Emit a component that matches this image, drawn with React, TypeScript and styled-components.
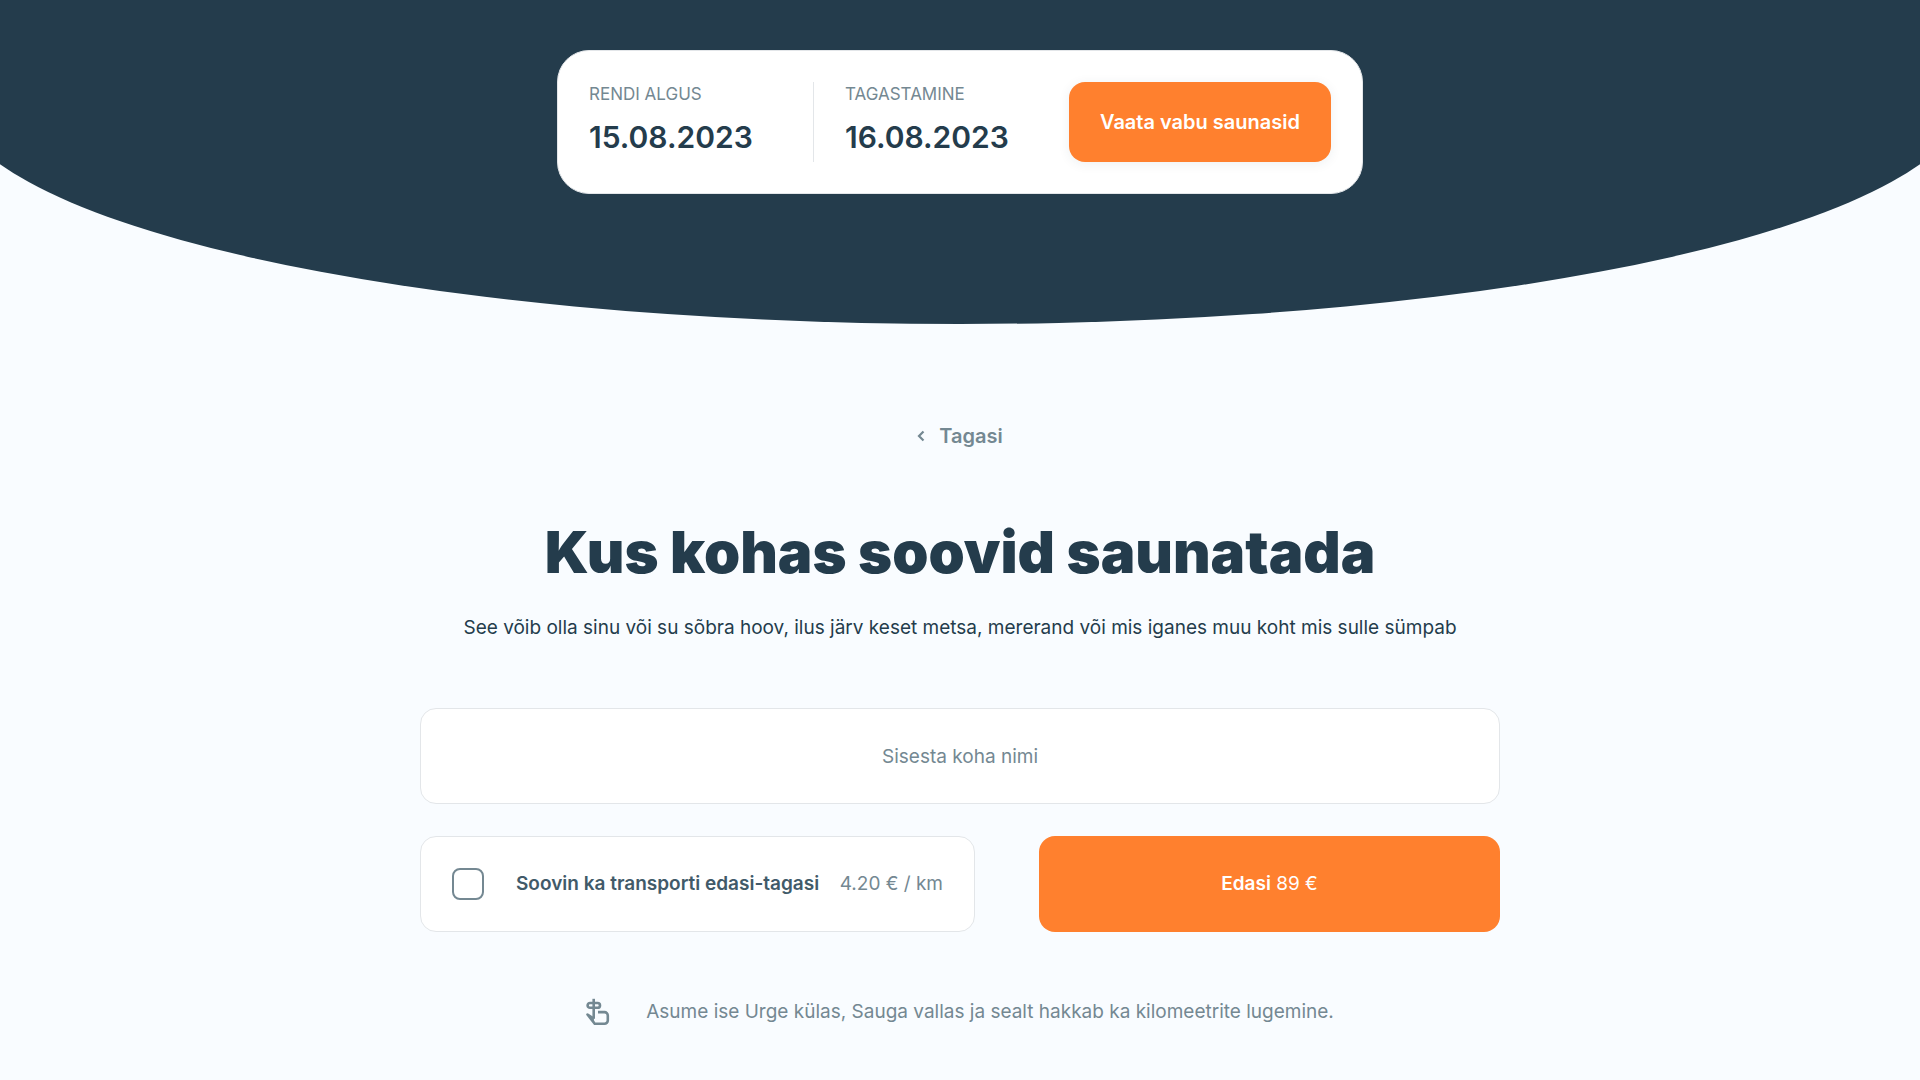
import React, { useState } from "react";
import styled, { createGlobalStyle } from "styled-components";

const ink = "#243c4c";
const muted = "#748892";
const line = "#e3e6e9";
const orange = "#ff802e";
const sans = `Inter, "Noto Sans", sans-serif`;

const GlobalStyle = createGlobalStyle`
  *, *::before, *::after { box-sizing: border-box; }
  body {
    margin: 0;
    background: #f9fcff;
    color: ${ink};
    font-family: ${sans};
    font-size: 19px;
    line-height: 32px;
  }
  button, input { font: inherit; color: inherit; }
`;

const Page = styled.div`
  overflow-x: clip;
`;

const Hero = styled.header`
  display: flex;
  justify-content: center;
  margin: 0 -2.5%;
  padding: 50px 5% 130px;
  background: ${ink};
  border-radius: 0 0 50% 50% / 0 0 230px 230px;
`;

const SearchCard = styled.form`
  display: grid;
  grid-template-columns: 224fr 256fr auto;
  width: 100%;
  max-width: 806px;
  padding: 31px;
  background: #fff;
  border: 1px solid ${line};
  border-radius: 32px;
`;

const DateField = styled.label<{ $divided?: boolean }>`
  display: flex;
  flex-direction: column;
  min-width: 0;
  padding-left: ${(p) => (p.$divided ? "31px" : "0")};
  border-left: ${(p) => (p.$divided ? `1px solid ${line}` : "0")};
`;

const FieldName = styled.span`
  font-size: 17px;
  line-height: 24px;
  color: ${muted};
  text-transform: uppercase;
`;

const DateInput = styled.input`
  width: 100%;
  height: 56px;
  padding: 6px 0 0;
  border: 0;
  outline: 0;
  background: transparent;
  font-size: 30px;
  font-weight: 600;
`;

const PrimaryButton = styled.button`
  padding: 0 31px;
  border: 0;
  border-radius: 16px;
  background: ${orange};
  color: #fff;
  cursor: pointer;
`;

const SearchButton = styled(PrimaryButton)`
  min-width: 262px;
  font-size: 20px;
  font-weight: 600;
  box-shadow: 0 2px 12px rgba(36, 60, 76, 0.08);
`;

const Main = styled.main`
  display: flex;
  flex-direction: column;
  align-items: center;
  width: 100%;
  max-width: 1144px;
  margin: 0 auto;
  padding: 96px 32px 52px;
`;

const BackLink = styled.a`
  display: flex;
  align-items: center;
  gap: 14px;
  color: ${muted};
  font-size: 20px;
  font-weight: 600;
  text-decoration: none;
`;

const Title = styled.h1`
  margin: 60px 0 0;
  font-size: 58px;
  font-weight: 900;
  line-height: 80px;
  text-align: center;
`;

const Lead = styled.p`
  margin: 20px 0 64px;
  text-align: center;
`;

const BookingForm = styled.form`
  display: grid;
  gap: 32px;
  width: 100%;
`;

const PlaceInput = styled.input`
  width: 100%;
  height: 96px;
  padding: 0 32px;
  border: 1px solid ${line};
  border-radius: 16px;
  background: #fff;
  text-align: center;
  &::placeholder { color: ${muted}; opacity: 1; }
`;

const FormRow = styled.div`
  display: grid;
  grid-template-columns: 555fr 461fr;
  gap: 64px;
`;

const TransportOption = styled.label`
  display: flex;
  align-items: center;
  height: 96px;
  padding: 0 31px;
  border: 1px solid ${line};
  border-radius: 16px;
  background: #fff;
  white-space: nowrap;
  cursor: pointer;
`;

const Checkbox = styled.input`
  appearance: none;
  width: 32px;
  height: 32px;
  margin: 0 32px 0 0;
  border: 2px solid ${muted};
  border-radius: 8px;
  &:checked { background: ${orange}; }
`;

const OptionName = styled.span`
  color: #415a69;
  font-weight: 600;
`;

const OptionPrice = styled.span`
  margin-left: auto;
  color: ${muted};
`;

const Strong = styled.strong`
  font-weight: 600;
`;

const Note = styled.p`
  display: flex;
  align-items: center;
  gap: 36px;
  margin: 64px 0 0;
  color: ${muted};
`;

const ChevronIcon = () => (
  <svg width="8" height="12" viewBox="0 0 8 12" fill="none" stroke="currentColor" strokeWidth="2.2" aria-hidden="true">
    <path d="M6.5 1.5 2 6l4.5 4.5" />
  </svg>
);

const HandIcon = () => (
  <svg width="24" height="28" viewBox="0 0 24 28" fill="none" stroke="currentColor" strokeWidth="2.6" strokeLinejoin="round" aria-hidden="true">
    <path d="M7.7 0.8v20" />
    <rect x="1.6" y="5" width="12.4" height="4.8" rx="2.4" />
    <path d="M7.7 20.500 1.5 16.5 8.7 25.7H18.500a3.300 3.300 0 0 0 3.300-3.300v-5a3.300 3.300 0 0 0-3.300-3.300H12" />
    <path d="M1.5 16.5 7.7 20.5 8.7 25.7z" fill="currentColor" stroke="none" />
  </svg>
);

export default function App() {
  const [start, setStart] = useState("15.08.2023");
  const [end, setEnd] = useState("16.08.2023");
  return (
    <Page>
      <GlobalStyle />
      <Hero>
        <SearchCard onSubmit={(e) => e.preventDefault()}>
          <DateField>
            <FieldName>Rendi algus</FieldName>
            <DateInput value={start} onChange={(e) => setStart(e.target.value)} />
          </DateField>
          <DateField $divided>
            <FieldName>Tagastamine</FieldName>
            <DateInput value={end} onChange={(e) => setEnd(e.target.value)} />
          </DateField>
          <SearchButton type="submit">Vaata vabu saunasid</SearchButton>
        </SearchCard>
      </Hero>
      <Main>
        <BackLink href="#tagasi">
          <ChevronIcon />
          Tagasi
        </BackLink>
        <Title>Kus kohas soovid saunatada</Title>
        <Lead>See võib olla sinu või su sõbra hoov, ilus järv keset metsa, mererand või mis iganes muu koht mis sulle sümpab</Lead>
        <BookingForm onSubmit={(e) => e.preventDefault()}>
          <PlaceInput type="text" aria-label="Sisesta koha nimi" placeholder="Sisesta koha nimi" />
          <FormRow>
            <TransportOption>
              <Checkbox type="checkbox" />
              <OptionName>Soovin ka transporti edasi-tagasi</OptionName>
              <OptionPrice>4.20 € / km</OptionPrice>
            </TransportOption>
            <PrimaryButton type="submit">
              <Strong>Edasi</Strong> 89 €
            </PrimaryButton>
          </FormRow>
        </BookingForm>
        <Note>
          <HandIcon />
          Asume ise Urge külas, Sauga vallas ja sealt hakkab ka kilomeetrite lugemine.
        </Note>
      </Main>
    </Page>
  );
}
